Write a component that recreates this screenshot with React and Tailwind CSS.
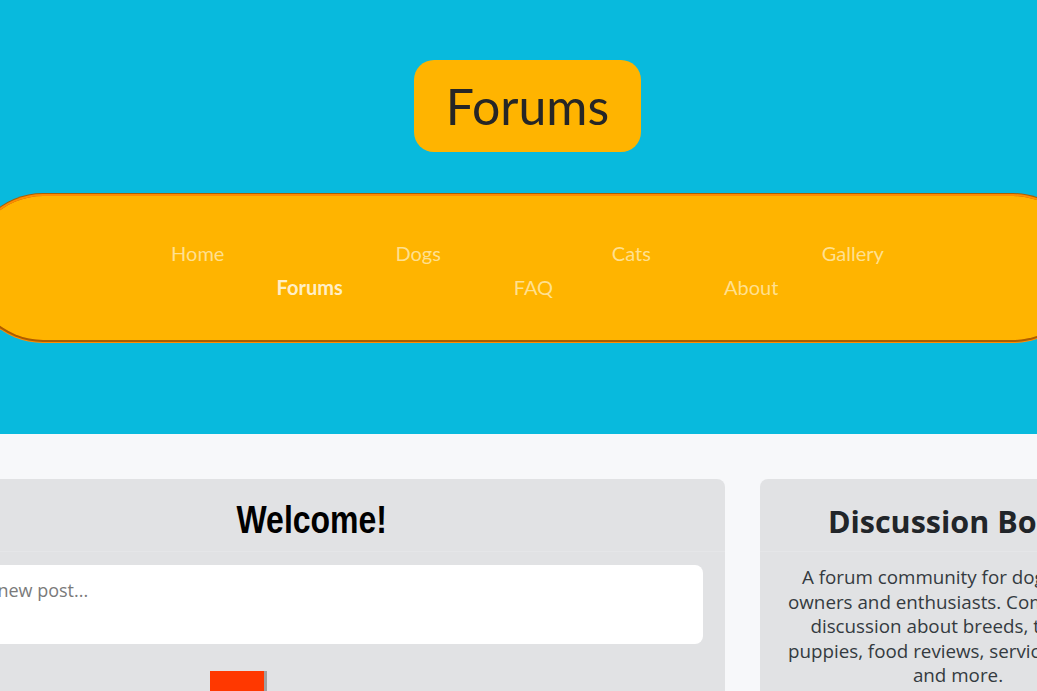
export default function App() {
  const row1 = ["Home", "Dogs", "Cats", "Gallery"];
  const row2 = [
    ["Forums", true],
    ["FAQ", false],
    ["About", false],
  ];
  return (
    <div className="min-h-screen overflow-hidden bg-[#f7f8fa] font-['Lato',sans-serif]">
      <header className="h-[434px] bg-[#08badd] flex flex-col items-center pl-[18px] pt-[60px]">
        <div className="h-[92px] px-[32px] rounded-[20px] bg-[#ffb400] flex items-center">
          <h1 className="text-[50px] leading-none text-[#262626] font-normal">Forums</h1>
        </div>
        <nav className="mt-[41px] w-[1120px] shrink-0 h-[150px] rounded-full border-[3px] [border-style:groove] border-[#ff8c00] bg-[#ffb400] flex flex-col justify-center pt-[4px] text-[20px] leading-[34px]">
          <ul className="flex justify-center">
            {row1.map((t) => (
              <li key={t} className="px-[85.5px] text-[rgba(255,248,220,0.66)]">
                {t}
              </li>
            ))}
          </ul>
          <ul className="flex justify-center">
            {row2.map(([t, active]) => (
              <li
                key={t}
                className={
                  active
                    ? "px-[85.5px] font-bold text-[rgba(255,250,235,0.85)]"
                    : "px-[85.5px] text-[rgba(255,248,220,0.66)]"
                }
              >
                {t}
              </li>
            ))}
          </ul>
        </nav>
      </header>

      <main className="flex justify-center gap-[35px] pl-[18px] pt-[45px] pb-10">
        <section className="w-[826px] shrink-0 rounded-lg bg-[#e1e2e4] pb-10">
          <div className="h-[73px] border-b border-[#e5e6e8] flex justify-center pt-[22px]">
            <h2 className="inline-block scale-x-[0.82] font-['Liberation_Sans',sans-serif] font-bold text-[39px] leading-[38px] text-black">
              Welcome!
            </h2>
          </div>
          <div className="px-[22px] pt-[13px]">
            <textarea
              className="block w-full h-[79px] resize-none rounded-lg bg-white px-3 pt-[12px] pb-[8px] text-[18px] leading-[26px] text-[#333] font-['Open_Sans',sans-serif] placeholder:text-[#7a7a7a] outline-none"
              placeholder="Write a new post..."
            />
            <div className="pt-[27px] pl-[289px]">
              <button className="w-[57px] h-[44px] bg-[#ff3800] border-r-[3px] border-[#a0a0a0] text-white text-[16px] pt-[22px]">
                Post
              </button>
            </div>
          </div>
        </section>

        <section className="w-[396px] shrink-0 rounded-lg bg-[#e1e2e4] pb-10">
          <div className="h-[73px] border-b border-[#e5e6e8] flex justify-center pt-[25px]">
            <h2 className="font-['Open_Sans',sans-serif] font-bold text-[30.5px] leading-[34px] text-[#212529]">
              Discussion Board
            </h2>
          </div>
          <div className="px-[10px] pt-[13px]">
            <p className="text-center font-['Open_Sans',sans-serif] text-[18.8px] leading-[24.5px] text-[#343a40]">
              <span className="block whitespace-nowrap">A forum community for dog and cat</span>
              <span className="block whitespace-nowrap">owners and enthusiasts. Come join the</span>
              <span className="block whitespace-nowrap">discussion about breeds, training,</span>
              <span className="block whitespace-nowrap">puppies, food reviews, service animals,</span>
              <span className="block whitespace-nowrap">and more.</span>
            </p>
          </div>
        </section>
      </main>
    </div>
  );
}
